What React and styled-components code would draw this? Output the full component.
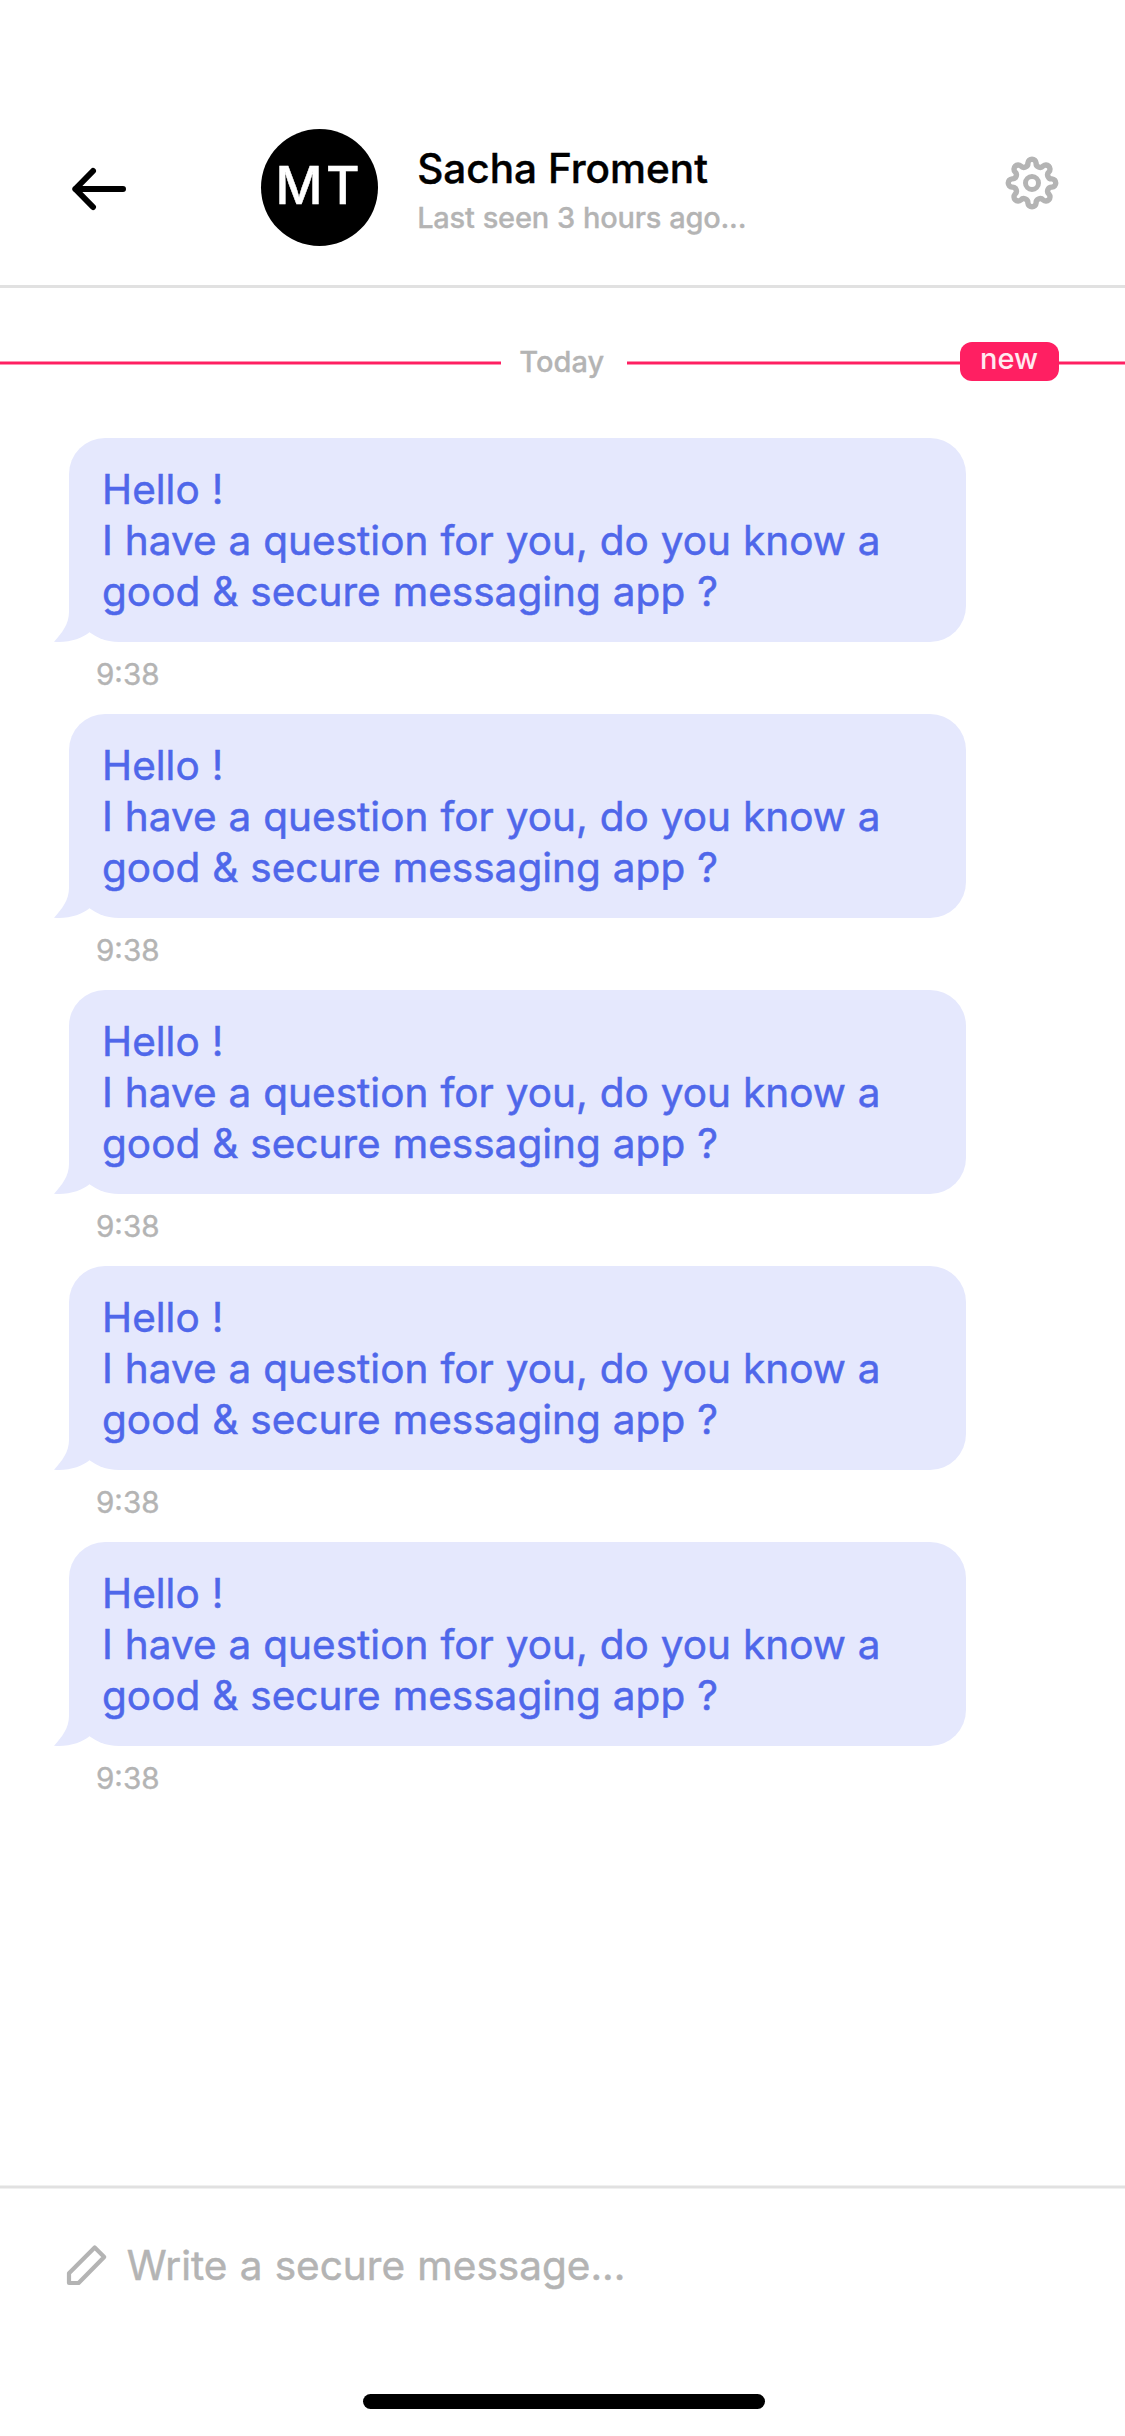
import React from "react";
import styled, { createGlobalStyle } from "styled-components";

const GlobalStyle = createGlobalStyle`
  * { box-sizing: border-box; }
  body {
    margin: 0;
    background: #fff;
    font-family: Inter, Roboto, "Liberation Sans", sans-serif;
  }
`;

const Screen = styled.div`
  display: flex;
  flex-direction: column;
  width: 1125px;
  height: 2436px;
  overflow: hidden;
  background: #fff;
`;

const Header = styled.header`
  display: flex;
  align-items: flex-start;
  height: 288px;
  padding: 129px 66px 0 72px;
  border-bottom: 3px solid #e1e1e1;
`;

const IconButton = styled.button`
  display: flex;
  flex: none;
  margin: ${(p) => p.$top}px 0 0;
  padding: 0;
  border: 0;
  background: none;
  color: ${(p) => p.$color};
`;

const Avatar = styled.div`
  flex: none;
  width: 117px;
  height: 117px;
  margin-left: 135px;
  padding-left: 14.6px;
  border-radius: 50%;
  background: #000;
  color: #fff;
  font-size: 51.5px;
  font-weight: 500;
  line-height: 113px;
  letter-spacing: 3.4px;
  white-space: nowrap;
  -webkit-text-stroke: 0.5px currentColor;
`;

const Contact = styled.div`
  flex: 1;
  display: flex;
  flex-direction: column;
  gap: 7px;
  margin-left: 39.2px;
  padding-top: 16px;
  white-space: nowrap;
`;

const ContactName = styled.div`
  color: #000;
  font-size: 40.5px;
  font-weight: 500;
  line-height: 48px;
  -webkit-text-stroke: 0.4px currentColor;
`;

const LastSeen = styled.div`
  color: #b4b4b4;
  font-size: 29px;
  font-weight: 500;
  line-height: 36px;
  letter-spacing: -0.23px;
  word-spacing: 0.6px;
  -webkit-text-stroke: 0.3px currentColor;
`;

const Thread = styled.main`
  flex: 1;
  padding-top: 54px;
`;

const DayDivider = styled.div`
  display: flex;
  align-items: center;
  height: 42px;
  margin-bottom: 54px;
`;

const Rule = styled.span`
  flex: none;
  width: ${(p) => p.$width}px;
  height: 4px;
  border: solid #ff90b0;
  border-width: 1px 0;
  background: #ff1f62;
`;

const DayLabel = styled.span`
  flex: none;
  width: 126px;
  padding: 0 0 2px 18.3px;
  color: #b4b4b4;
  font-size: 29px;
  font-weight: 500;
  line-height: 34px;
  -webkit-text-stroke: 0.3px currentColor;
`;

const NewBadge = styled.span`
  flex: none;
  align-self: flex-start;
  width: 99px;
  height: 39px;
  padding-left: 20px;
  border-radius: 12px;
  background: #ff1f62;
  color: #ffe9f0;
  font-size: 29px;
  font-weight: 500;
  line-height: 33px;
`;

const MessageList = styled.div`
  display: flex;
  flex-direction: column;
  gap: 22px;
  padding-left: 69px;
`;

const Message = styled.article`
  display: flex;
  flex-direction: column;
  gap: 14px;
`;

const Bubble = styled.div`
  position: relative;
  width: 897px;
  height: 204px;
  padding: 26px 33px 25px;
  border-radius: 36px 36px 36px 50px;
  background: #e5e8fd;
  color: #4f67ea;
  font-size: 40.5px;
  line-height: 51px;
  letter-spacing: 0.03px;
  word-spacing: 0.5px;
  white-space: nowrap;
  -webkit-text-stroke: 0.5px currentColor;
`;

const Tail = styled.svg`
  position: absolute;
  left: -15px;
  bottom: 0;
`;

const Line = styled.div`
  position: relative;
  height: 51px;
`;

const Time = styled.time`
  padding-left: 27px;
  color: #b4b4b4;
  font-size: 29.6px;
  line-height: 36px;
  -webkit-text-stroke: 0.4px currentColor;
`;

const Composer = styled.footer`
  display: flex;
  flex-direction: column;
  align-items: center;
  height: 251px;
`;

const Separator = styled.div`
  flex: none;
  width: 100%;
  height: 4px;
  border: solid #f0f0f0;
  border-width: 1px 0;
  background: #e1e1e1;
`;

const Field = styled.div`
  display: flex;
  align-items: flex-start;
  gap: 18.7px;
  width: 100%;
  height: 205px;
  padding: 50.5px 0 0 66px;
  color: #b4b4b4;
`;

const PencilSvg = styled.svg`
  flex: none;
  margin-top: 4.5px;
`;

const Placeholder = styled.div`
  color: #b4b4b4;
  font-size: 40.5px;
  line-height: 51px;
  letter-spacing: 0.02px;
  word-spacing: 0.8px;
  white-space: nowrap;
  -webkit-text-stroke: 0.5px currentColor;
`;

const HomeIndicator = styled.div`
  width: 402px;
  height: 15px;
  margin-left: 3px;
  border-radius: 8px;
  background: #000;
`;

// Outline of an eight-lobed cog: lobe arcs and valley arcs joined at their tangent points.
function cogPath(c = 27, lobes = 8) {
  const lobeR = 20.2;
  const lobeArc = 4.1;
  const valleyR = 21.3;
  const valleyArc = 4.08;
  const at = (deg, r) => {
    const a = ((deg - 90) * Math.PI) / 180;
    return [c + r * Math.cos(a), c + r * Math.sin(a)];
  };
  const step = 360 / lobes;
  const joint = (lobeDeg, valleyDeg) => {
    const [lx, ly] = at(lobeDeg, lobeR);
    const [vx, vy] = at(valleyDeg, valleyR);
    const t = lobeArc / (lobeArc + valleyArc);
    return `${(lx + (vx - lx) * t).toFixed(2)} ${(ly + (vy - ly) * t).toFixed(2)}`;
  };
  let d = `M${joint(0, -step / 2)}`;
  for (let i = 0; i < lobes; i++) {
    const k = i * step;
    d += `A${lobeArc} ${lobeArc} 0 0 1 ${joint(k, k + step / 2)}`;
    d += `A${valleyArc} ${valleyArc} 0 0 0 ${joint(k + step, k + step / 2)}`;
  }
  return d + "Z";
}

const COG = cogPath();

const BackIcon = () => (
  <svg width="54" height="44" viewBox="0 0 54 44" fill="none" stroke="currentColor" strokeWidth="6" strokeLinecap="round" strokeLinejoin="round">
    <path d="M51 22H3.3M21 4L3.3 22L21 40" />
  </svg>
);

const CogIcon = () => (
  <svg width="54" height="54" viewBox="0 0 54 54" fill="none" stroke="currentColor" strokeWidth="5.4">
    <path d={COG} />
    <circle cx="27" cy="27" r="6.5" strokeWidth="5" />
  </svg>
);

const PencilIcon = () => (
  <PencilSvg width="42" height="42" viewBox="0 0 42 42" fill="none" stroke="currentColor" strokeWidth="4.2" strokeLinejoin="round">
    <path d="M3 39V29.2L28.7 3.5L38.2 13L12.6 39Z" />
  </PencilSvg>
);

const BubbleTail = () => (
  <Tail width="36" height="54" viewBox="0 0 36 54" fill="#e5e8fd">
    <path d="M15 0V24C15 36 8 45 0 53.8C15 55 28 50.5 35.5 44.3V0Z" />
  </Tail>
);

const messages = Array.from({ length: 5 }, (_, id) => ({
  id,
  time: "9:38",
  lines: ["Hello !", "I have a question for you, do you know a", "good & secure messaging app ?"],
}));

export default function App() {
  return (
    <>
      <GlobalStyle />
      <Screen>
        <Header>
          <IconButton $top={38} $color="#000" aria-label="Back">
            <BackIcon />
          </IconButton>
          <Avatar>MT</Avatar>
          <Contact>
            <ContactName>Sacha Froment</ContactName>
            <LastSeen>Last seen 3 hours ago...</LastSeen>
          </Contact>
          <IconButton $top={27} $color="#b4b4b4" aria-label="Settings">
            <CogIcon />
          </IconButton>
        </Header>
        <Thread>
          <DayDivider>
            <Rule $width={501} />
            <DayLabel>Today</DayLabel>
            <Rule $width={333} />
            <NewBadge>new</NewBadge>
            <Rule $width={66} />
          </DayDivider>
          <MessageList>
            {messages.map((m) => (
              <Message key={m.id}>
                <Bubble>
                  <BubbleTail />
                  {m.lines.map((line) => (
                    <Line key={line}>{line}</Line>
                  ))}
                </Bubble>
                <Time>{m.time}</Time>
              </Message>
            ))}
          </MessageList>
        </Thread>
        <Composer>
          <Separator />
          <Field>
            <PencilIcon />
            <Placeholder>Write a secure message...</Placeholder>
          </Field>
          <HomeIndicator />
        </Composer>
      </Screen>
    </>
  );
}
